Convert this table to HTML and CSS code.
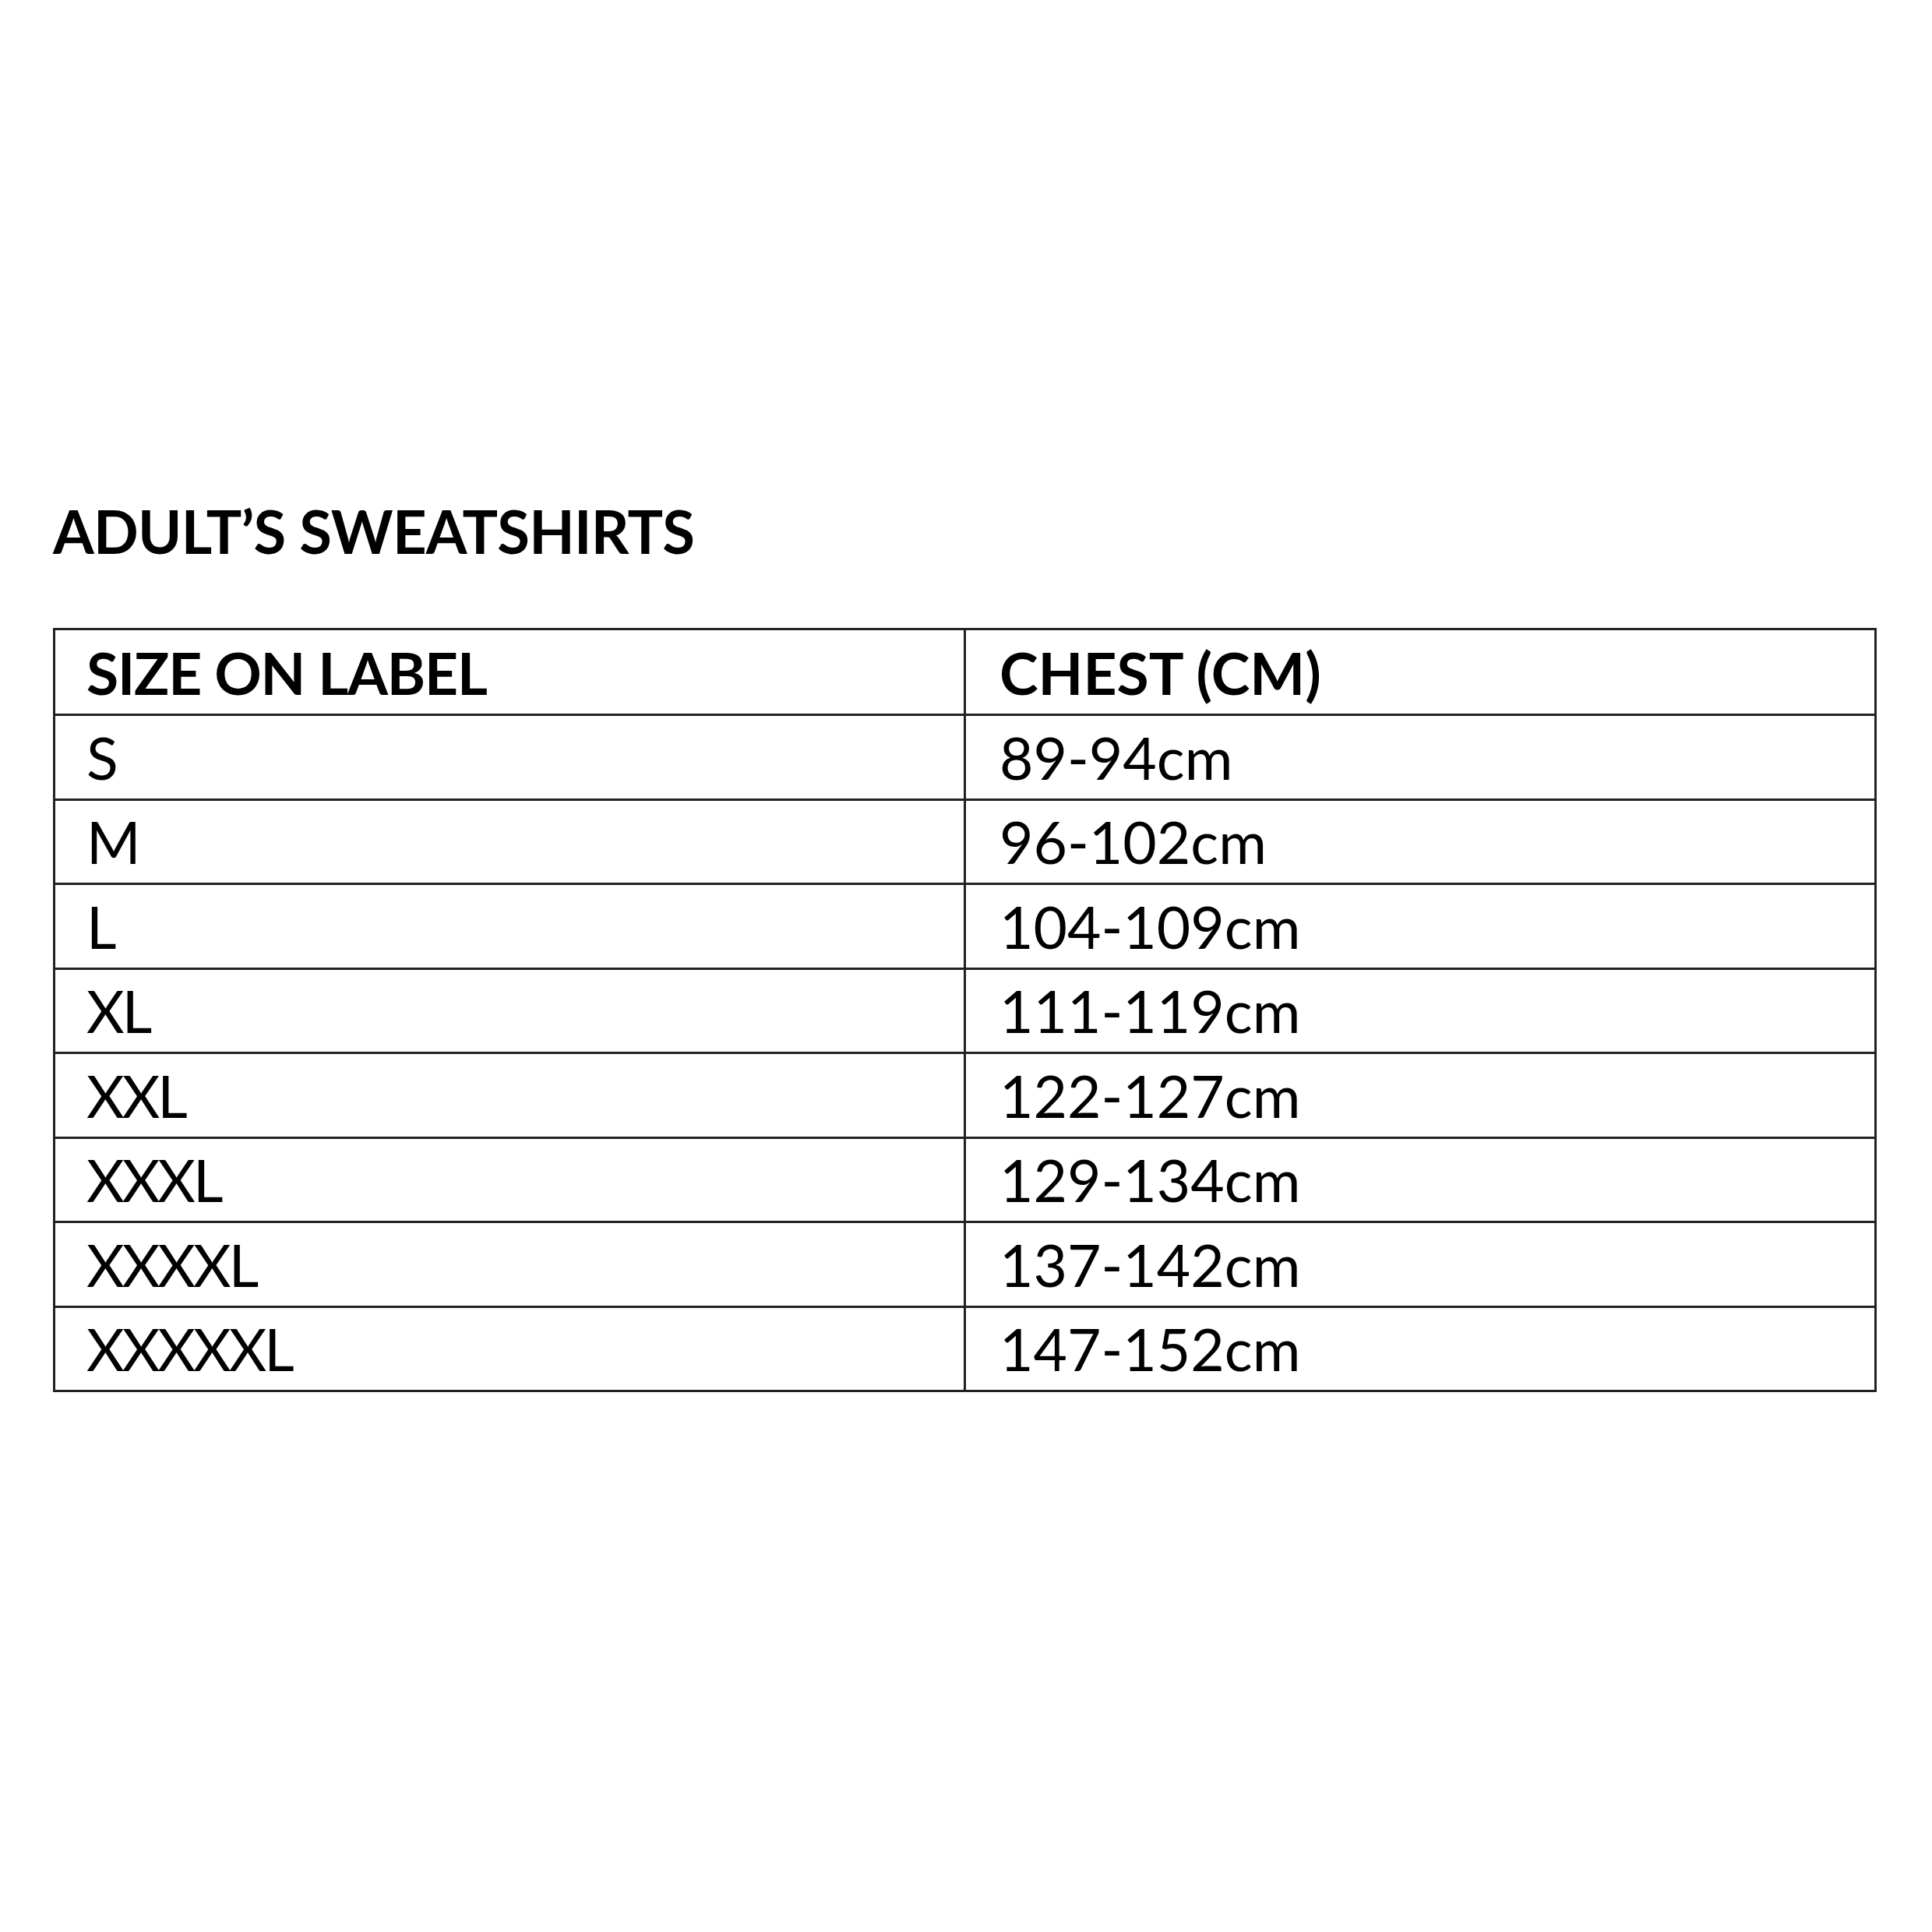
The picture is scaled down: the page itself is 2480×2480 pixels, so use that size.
FILE: index.html
```html
<!DOCTYPE html>
<html lang="en">
<head>
<meta charset="utf-8">
<title>Adult's Sweatshirts Size Chart</title>
<link rel="stylesheet" href="styles.css">
</head>
<body>
<main class="page">
  <h1 class="title">ADULT’S SWEATSHIRTS</h1>
  <table class="chart">
    <thead>
      <tr><th>SIZE ON LABEL</th><th>CHEST (CM)</th></tr>
    </thead>
    <tbody>
      <tr><td>S</td><td>89-94cm</td></tr>
      <tr><td>M</td><td>96-102cm</td></tr>
      <tr><td>L</td><td>104-109cm</td></tr>
      <tr><td>XL</td><td>111-119cm</td></tr>
      <tr><td>XXL</td><td>122-127cm</td></tr>
      <tr><td>XXXL</td><td>129-134cm</td></tr>
      <tr><td>XXXXL</td><td>137-142cm</td></tr>
      <tr><td>XXXXXL</td><td>147-152cm</td></tr>
    </tbody>
  </table>
</main>
</body>
</html>
```
FILE: styles.css
```css
html, body {
  margin: 0;
  padding: 0;
  background: #ffffff;
}
.page {
  padding: 636px 0 0 68px;
  font-family: Lato, "Open Sans", sans-serif;
  color: #000;
}
.title {
  margin: 0 0 79px 0;
  font-size: 76px;
  line-height: 1.2;
  font-weight: 700;
  letter-spacing: -0.75px;
}
.chart {
  border-collapse: collapse;
  table-layout: fixed;
  width: 2341px;
  font-size: 75px;
  line-height: 1.2;
}
.chart th,
.chart td {
  border: 3px solid #222;
  padding: 0 0 0 43px;
  text-align: left;
  vertical-align: middle;
  height: 105.5px;
}
.chart th:first-child,
.chart td:first-child {
  padding-left: 40px;
}
.chart th {
  font-weight: 700;
  height: 107px;
}
.chart th:first-child {
  letter-spacing: -1.2px;
}
.chart td {
  font-weight: 400;
}
.chart td:first-child {
  letter-spacing: -3px;
}
```
